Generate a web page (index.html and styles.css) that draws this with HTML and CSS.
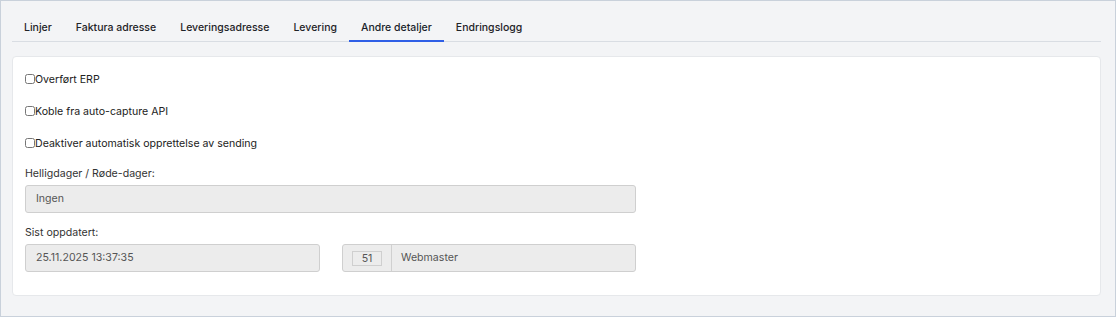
FILE: index.html
```html
<!DOCTYPE html>
<html lang="no">
<head>
    <meta charset="UTF-8">
    <title>Andre detaljer</title>
    <link rel="stylesheet" href="styles.css">
</head>
<body>

<div class="page">
    <nav class="tabs">
        <a class="tab">Linjer</a>
        <a class="tab">Faktura adresse</a>
        <a class="tab">Leveringsadresse</a>
        <a class="tab">Levering</a>
        <a class="tab active">Andre detaljer</a>
        <a class="tab">Endringslogg</a>
    </nav>

    <div class="card">
        <label class="check"><input type="checkbox">Overført ERP</label>
        <label class="check"><input type="checkbox">Koble fra auto-capture API</label>
        <label class="check"><input type="checkbox">Deaktiver automatisk opprettelse av sending</label>

        <div class="field">
            <div class="field-label">Helligdager / Røde-dager:</div>
            <div class="box wide">Ingen</div>
        </div>

        <div class="field">
            <div class="field-label">Sist oppdatert:</div>
            <div class="row">
                <div class="box">25.11.2025 13:37:35</div>
                <div class="box user">
                    <span class="user-id"><span class="id-tag">51</span></span>
                    <span class="user-name">Webmaster</span>
                </div>
            </div>
        </div>
    </div>
</div>

</body>
</html>
```

FILE: styles.css
```css
* { box-sizing: border-box; }
html, body { margin: 0; padding: 0; }
body { font-family: Inter, "Noto Sans", sans-serif; font-size: 10.6px; color: #222; background: #f3f4f6; }

.page { width: 1116px; height: 317px; border: 1px solid #c9d1db; background: #f3f4f6; padding: 0 14px 0 11px; }

.tabs { display: flex; border-bottom: 1px solid #d9dde3; padding-top: 12px; }
.tab { padding: 8px 12px 6px; font-size: 10.5px; line-height: 13px; font-weight: 500; color: #1f2328; border-bottom: 2px solid transparent; margin-bottom: -1px; cursor: pointer; }
.tab.active { border-bottom-color: #2f5fe6; color: #1a1f2b; }

.card { margin-top: 14px; background: #fff; border: 1px solid #e6e8eb; border-radius: 4px; padding: 12px 12px 23px; }

.check { display: flex; align-items: center; height: 20px; margin-bottom: 12px; color: #222; }
.check input { width: 10px; height: 10px; margin: 0; }

.field-label { color: #333; height: 18px; line-height: 18px; margin-bottom: 2px; }
.field + .field { margin-top: 11px; }

.box { height: 28px; line-height: 26px; background: #ececec; border: 1px solid #cfcfcf; border-radius: 3px; padding: 0 10px; color: #555; }
.wide { width: 611px; }
.row { display: grid; grid-template-columns: 295px 294px; column-gap: 22px; }

.user { display: flex; padding: 0; }
.user-id { width: 49px; border-right: 1px solid #d0d0d0; display: flex; align-items: center; justify-content: center; }
.id-tag { width: 30px; height: 15px; line-height: 13px; border: 1px solid #cfcfcf; text-align: center; color: #555; }
.user-name { padding-left: 9px; }
```
